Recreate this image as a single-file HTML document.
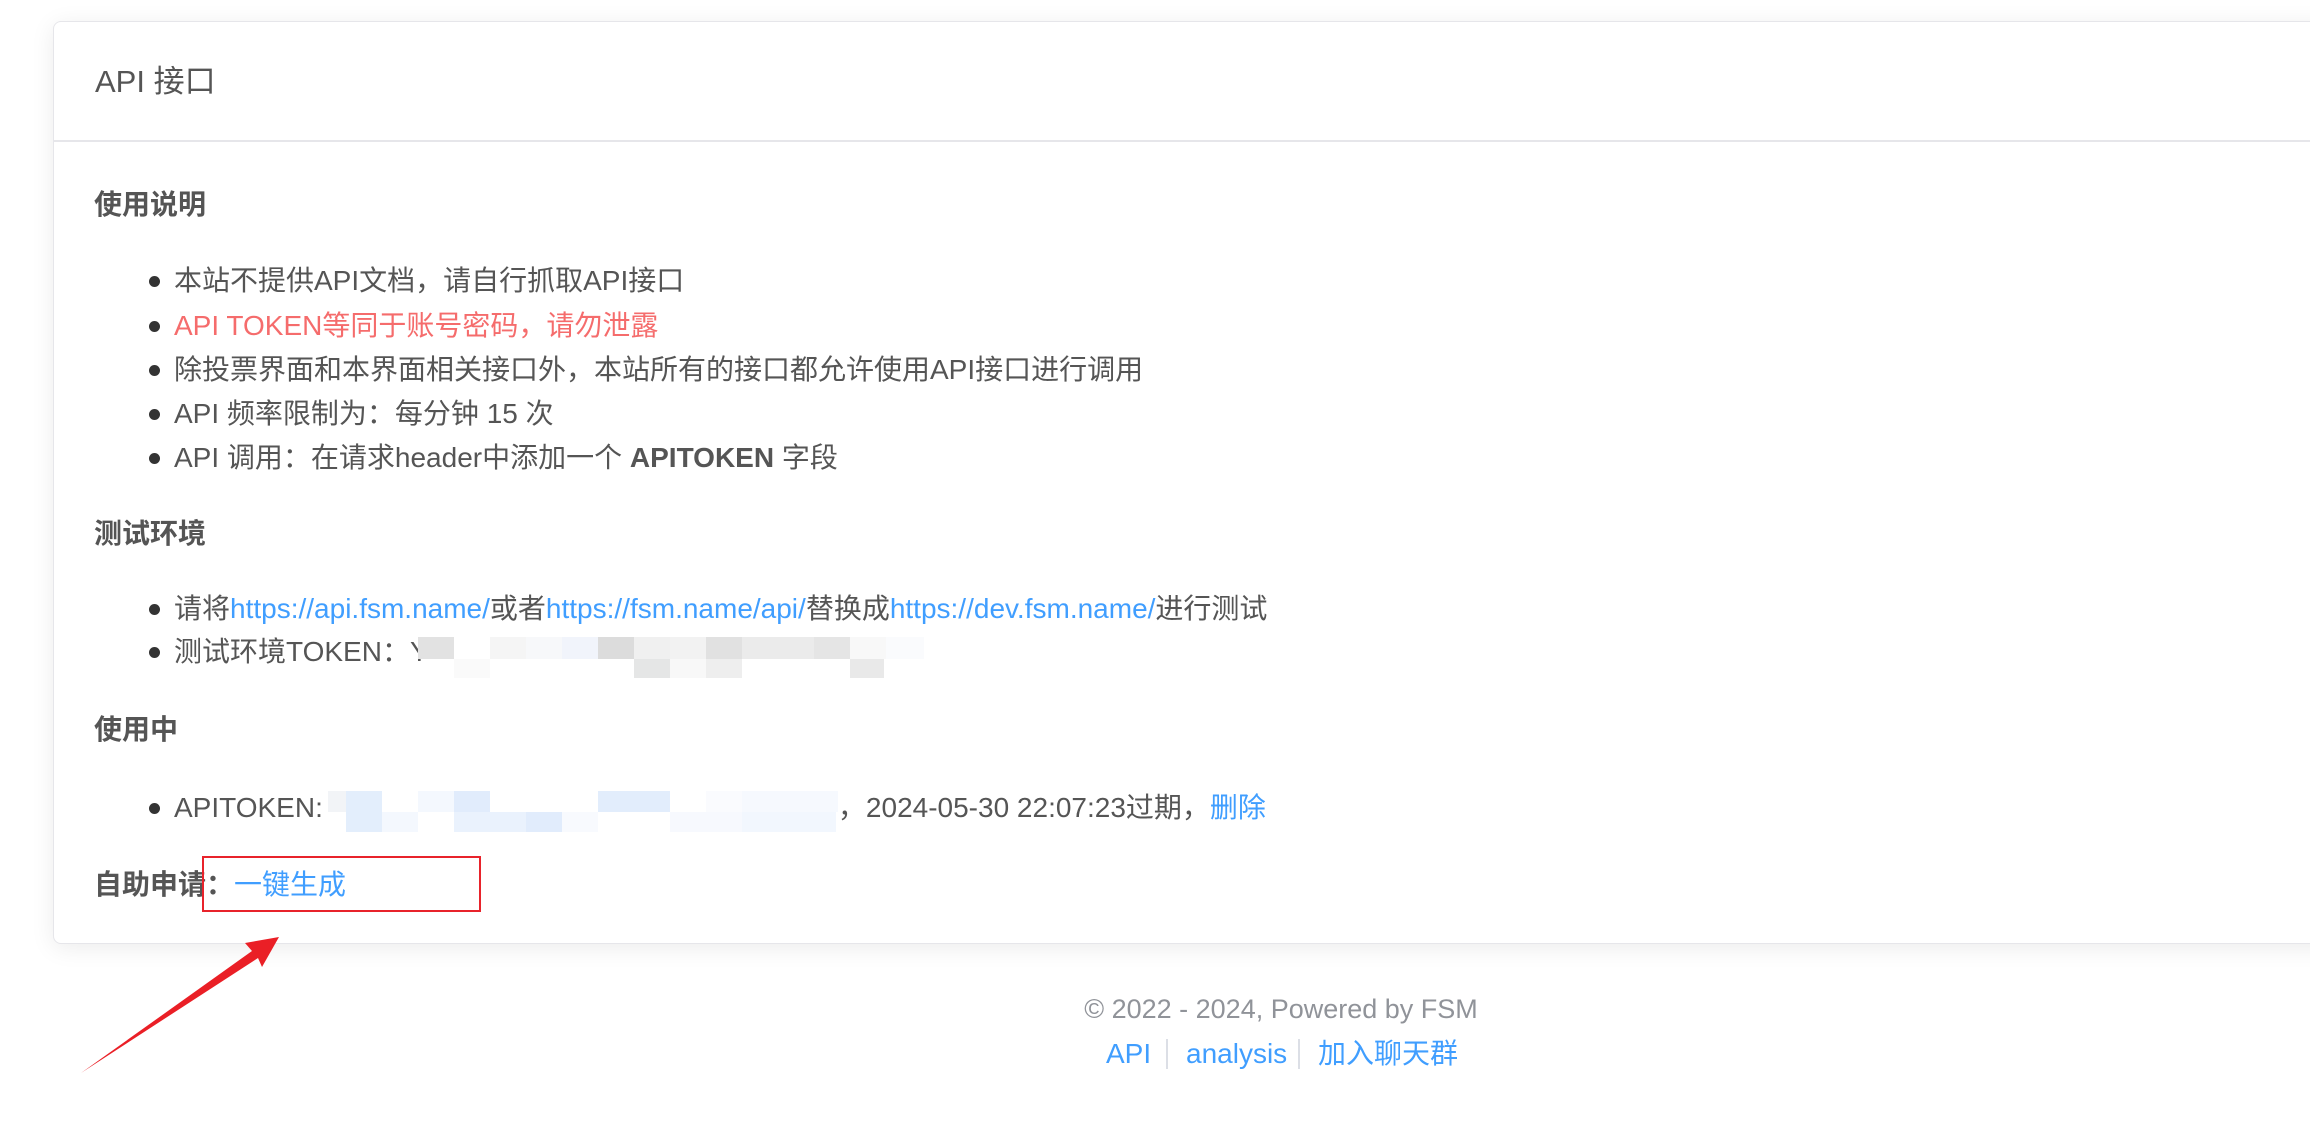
<!DOCTYPE html>
<html><head><meta charset="utf-8"><style>
*{margin:0;padding:0;box-sizing:border-box}
body{width:2310px;height:1134px;overflow:hidden;background:#fff;font-family:"Liberation Sans","Noto Sans CJK SC",sans-serif;color:#555;position:relative}
.card{position:absolute;left:53px;top:21px;width:2300px;height:923px;background:#fff;border:1px solid #e6e6ea;border-radius:8px;box-shadow:0 4px 24px rgba(0,0,0,.08)}
.hd{height:120px;border-bottom:2px solid #e6e6ea;padding-left:41px;font-size:31px;line-height:120px;color:#555}
.a{position:absolute;white-space:nowrap;font-size:28px;line-height:40px}
h4{position:absolute;left:94px;font-size:28px;font-weight:bold;color:#555;line-height:40px}
.li{left:174px}
.li:before{content:"";position:absolute;left:-25px;top:15px;width:11px;height:11px;border-radius:50%;background:#333}
.r{color:#f56c6c}.b{color:#409eff}
.px{position:absolute}
</style></head><body>
<div class="card"><div class="hd">API 接口</div></div>
<h4 style="top:185px">使用说明</h4>
<div class="a li" style="top:261px">本站不提供API文档，请自行抓取API接口</div>
<div class="a li r" style="top:306px">API TOKEN等同于账号密码，请勿泄露</div>
<div class="a li" style="top:350px">除投票界面和本界面相关接口外，本站所有的接口都允许使用API接口进行调用</div>
<div class="a li" style="top:394px">API 频率限制为：每分钟 15 次</div>
<div class="a li" style="top:438px">API 调用：在请求header中添加一个 <b>APITOKEN</b> 字段</div>
<h4 style="top:514px">测试环境</h4>
<div class="a li" style="top:589px">请将<span class="b">https://api.fsm.name/</span>或者<span class="b">https://fsm.name/api/</span>替换成<span class="b">https://dev.fsm.name/</span>进行测试</div>
<div class="a li" style="top:632px">测试环境TOKEN：Y</div>
<div class="px" style="left:418px;top:637px;width:506px;height:22px;background:linear-gradient(90deg,#e2e2e2 0 36px,#fff 36px 72px,#f5f5f5 72px 108px,#f7f8fa 108px 144px,#f1f4fb 144px 180px,#dcdcdc 180px 216px,#f0f0f0 216px 252px,#f2f2f2 252px 288px,#e1e1e1 288px 324px,#ebebeb 324px 396px,#e5e5e5 396px 432px,#f8f8f8 432px 468px,#fafbfd 468px)"></div>
<div class="px" style="left:454px;top:659px;width:430px;height:19px;background:linear-gradient(90deg,#fafafa 0 36px,#fff 36px 180px,#e5e6e6 180px 216px,#f8f8f8 216px 252px,#eeeeee 252px 288px,#fff 288px 396px,#e9e9e9 396px 432px)"></div>
<h4 style="top:710px">使用中</h4>
<div class="a li" style="top:788px">APITOKEN: <span style="display:inline-block;width:500px"></span><span class="b">|</span>，2024-05-30 22:07:23过期，<span class="b">删除</span></div>
<div class="px" style="left:328px;top:791px;width:510px;height:21px;background:linear-gradient(90deg,#f2f4f7 0 18px,#e3eefc 18px 54px,#fff 54px 90px,#f4f8fe 90px 126px,#e1ecfc 126px 162px,#fff 162px 270px,#e2edfc 270px 342px,#fff 342px 378px,#fafbfe 378px 414px,#f6f9fe 414px)"></div>
<div class="px" style="left:346px;top:812px;width:490px;height:20px;background:linear-gradient(90deg,#e3eefc 0 36px,#f4f8fe 36px 72px,#fff 72px 108px,#eaf2fd 108px 180px,#e1ecfc 180px 216px,#f8fafe 216px 252px,#fff 252px 324px,#f7f9fe 324px 396px,#f2f7fe 396px 432px)"></div>
<div class="a" style="left:94px;top:865px;font-weight:bold">自助申请：<span class="b" style="font-weight:normal">一键生成</span></div>
<div class="px" style="left:202px;top:856px;width:279px;height:56px;border:2px solid #e8232b"></div>
<svg class="px" style="left:0;top:0" width="2310" height="1134"><polygon points="81,1073 252,951 245,943 279,937 262,967 258,958" fill="#ea1f26"/></svg>
<div class="a" style="left:0;width:2562px;text-align:center;top:989px;font-size:27px;color:#909399">© 2022 - 2024, Powered by FSM</div>
<div class="a" style="left:1106px;top:1034px;font-size:28px;color:#409eff">API</div>
<div class="px" style="left:1166px;top:1039px;width:2px;height:30px;background:#dcdfe6"></div>
<div class="a" style="left:1186px;top:1034px;font-size:28px;color:#409eff">analysis</div>
<div class="px" style="left:1298px;top:1039px;width:2px;height:30px;background:#dcdfe6"></div>
<div class="a" style="left:1318px;top:1034px;font-size:28px;color:#409eff">加入聊天群</div>
</body></html>
